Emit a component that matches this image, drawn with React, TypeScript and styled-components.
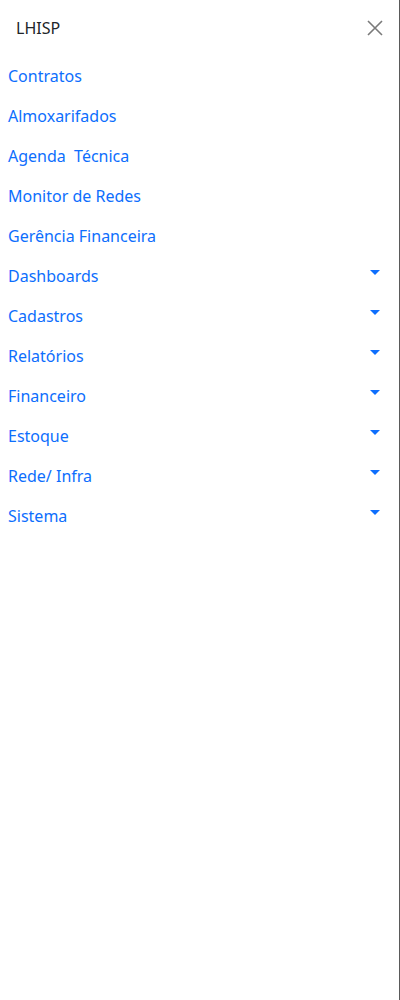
import React from 'react';
import styled, { createGlobalStyle } from 'styled-components';

const GlobalStyle = createGlobalStyle`
  html, body {
    margin: 0;
    padding: 0;
    background: #ffffff;
  }
  body {
    font-family: "Noto Sans", "Open Sans", Arial, sans-serif;
    font-size: 16px;
    line-height: 1.5;
    color: #212529;
  }
`;

const Offcanvas = styled.aside`
  width: 400px;
  height: 1000px;
  box-sizing: border-box;
  border-right: 1px solid #5a5a5a;
  background: #ffffff;
  display: flex;
  flex-direction: column;
`;

const Header = styled.div`
  display: flex;
  align-items: center;
  justify-content: space-between;
  padding: 16px 16px;
`;

const Title = styled.h5`
  margin: 0;
  font-size: 16px;
  font-weight: 400;
  line-height: 24px;
  color: #212529;
`;

const CloseButton = styled.button`
  width: 16px;
  height: 16px;
  padding: 0;
  margin-right: 0;
  border: 0;
  background: transparent;
  cursor: pointer;
  display: flex;
  align-items: center;
  justify-content: center;
`;

const Nav = styled.ul`
  list-style: none;
  margin: 0;
  padding: 0;
`;

const NavItem = styled.li`
  margin: 0;
`;

const NavLink = styled.a<{ $dropdown?: boolean }>`
  display: flex;
  align-items: center;
  justify-content: space-between;
  padding: 8px 19px 8px 8px;
  line-height: 24px;
  color: #0d6efd;
  text-decoration: none;
  white-space: pre;
  cursor: pointer;
`;

const Caret = styled.span`
  width: 0;
  height: 0;
  margin-bottom: 7px;
  border-top: 5px solid #0d6efd;
  border-left: 5px solid transparent;
  border-right: 5px solid transparent;
`;

const links: { label: string; dropdown?: boolean }[] = [
  { label: 'Contratos' },
  { label: 'Almoxarifados' },
  { label: 'Agenda  Técnica' },
  { label: 'Monitor de Redes' },
  { label: 'Gerência Financeira' },
  { label: 'Dashboards', dropdown: true },
  { label: 'Cadastros', dropdown: true },
  { label: 'Relatórios', dropdown: true },
  { label: 'Financeiro', dropdown: true },
  { label: 'Estoque', dropdown: true },
  { label: 'Rede/ Infra', dropdown: true },
  { label: 'Sistema', dropdown: true },
];

const App = () => {
  return (
    <>
      <GlobalStyle />
      <Offcanvas>
        <Header>
          <Title>LHISP</Title>
          <CloseButton aria-label="Close">
            <svg width="16" height="16" viewBox="0 0 16 16">
              <path d="M1 1 L15 15 M15 1 L1 15" stroke="#7a7a7a" strokeWidth="1.6" fill="none" />
            </svg>
          </CloseButton>
        </Header>
        <Nav>
          {links.map((l) => (
            <NavItem key={l.label}>
              <NavLink $dropdown={l.dropdown}>
                <span>{l.label}</span>
                {l.dropdown && <Caret />}
              </NavLink>
            </NavItem>
          ))}
        </Nav>
      </Offcanvas>
    </>
  );
};

export default App;
